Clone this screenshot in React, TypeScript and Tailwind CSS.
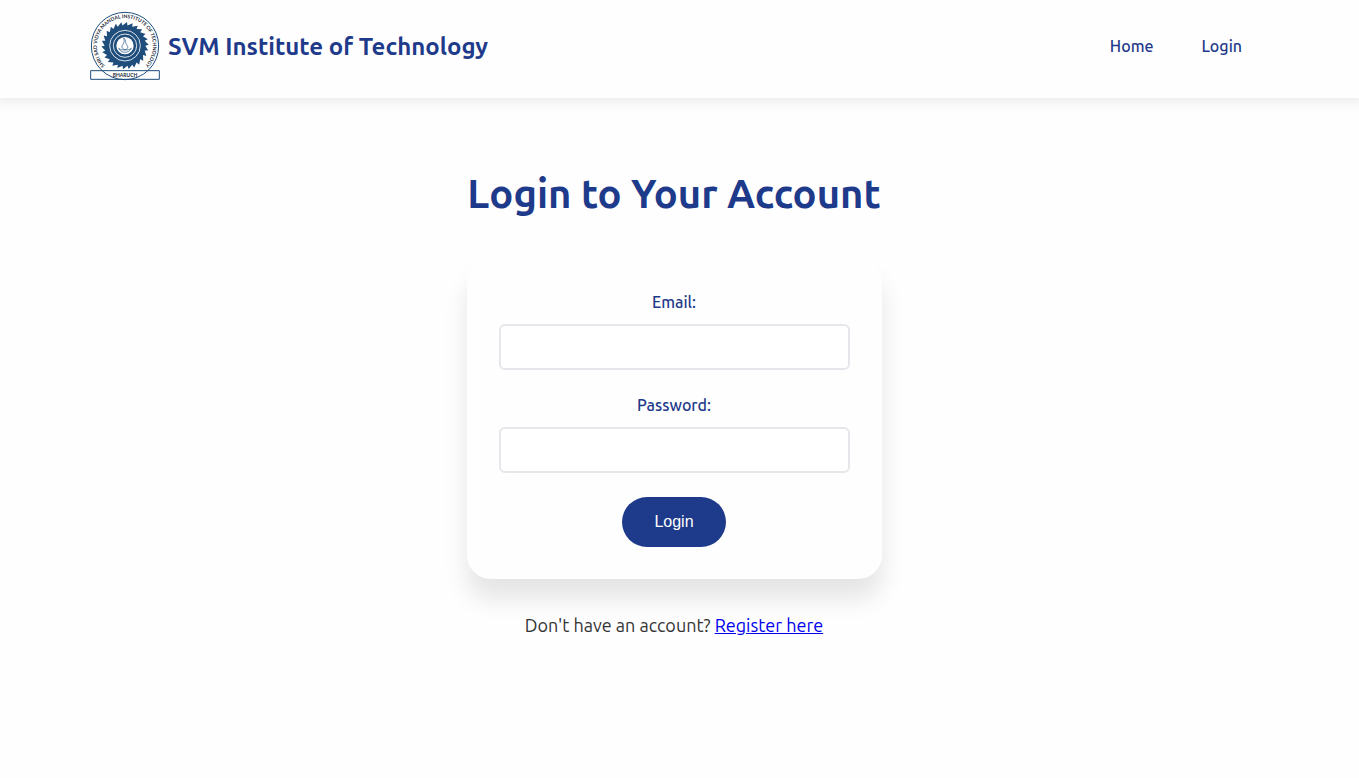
import { useId } from "react";

const TEETH = 26;

function gearPath(cx: number, cy: number, inner: number, outer: number) {
  const points: string[] = [];
  for (let i = 0; i < TEETH; i++) {
    const start = (i / TEETH) * Math.PI * 2;
    const end = ((i + 0.85) / TEETH) * Math.PI * 2;
    points.push(`${(cx + Math.cos(start) * inner).toFixed(1)} ${(cy + Math.sin(start) * inner).toFixed(1)}`);
    points.push(`${(cx + Math.cos(end) * outer).toFixed(1)} ${(cy + Math.sin(end) * outer).toFixed(1)}`);
  }
  return `M${points.join("L")}Z`;
}

function Logo() {
  const arc = useId();
  return (
    <svg viewBox="0 0 210 210" className="size-[70px] shrink-0" role="img" aria-label="SVM Institute of Technology logo">
      <circle cx="105" cy="105" r="101" fill="#fff" stroke="#1f4e7c" strokeWidth="3" />
      <path d={gearPath(105, 104, 61, 71)} fill="#1f4e7c" />
      <circle cx="105" cy="104" r="46" fill="none" stroke="#fff" strokeWidth="2.5" />
      <circle cx="105" cy="104" r="35" fill="none" stroke="#fff" strokeWidth="2.5" />
      <circle cx="105" cy="104" r="26" fill="#fff" />
      <path
        d="M101 81c9 8 4 14 9 20 7 8 2 14-5 15-9-2-12-9-6-16 4-6 5-12 2-19ZM86 112c8 5 11 5 19 5s13-1 19-5c-6 15-31 17-38 0Z"
        fill="none"
        stroke="#1f4e7c"
        strokeWidth="2"
      />
      <path id={arc} d="M45 164A84 84 0 1 1 165 164" fill="none" />
      <text fill="#1c2b3a" className="font-['Lato',sans-serif] text-[15px] font-bold">
        <textPath href={`#${arc}`} startOffset="50%" textAnchor="middle">
          SHRI SAD VIDYA MANDAL INSTITUTE OF TECHNOLOGY
        </textPath>
      </text>
      <path d="M2 179H208V205H2Z" fill="none" stroke="#1f4e7c" strokeWidth="3" />
      <text x="105" y="198" textAnchor="middle" fill="#1c2b3a" className="font-['Lato',sans-serif] text-[15px] font-bold">
        BHARUCH
      </text>
    </svg>
  );
}

function Field({ id, label, type }: { id: string; label: string; type: string }) {
  return (
    <div className="mb-6 flex flex-col items-center">
      <label htmlFor={id} className="mb-[10px] text-base leading-[23px] font-medium text-[#1e3a8a]">
        {label}
      </label>
      <input
        id={id}
        type={type}
        className="h-[46px] w-full rounded-md border-2 border-gray-200 bg-white px-3 font-['Liberation_Sans',sans-serif] text-base outline-none focus:border-[#1e3a8a]"
      />
    </div>
  );
}

export default function App() {
  return (
    <div className="min-h-screen bg-[#fefefe] font-['Ubuntu','Noto_Sans',sans-serif] text-[#333]">
      <header className="bg-[#fefefe] pt-[11px] pr-[11px] pb-[17px] shadow-[0_0_12px_4px_rgba(0,0,0,0.08)]">
        <div className="mx-auto flex max-w-[1168px] items-center justify-between">
          <div className="flex items-center gap-2">
            <Logo />
            <span className="text-2xl leading-[33px] font-semibold text-[#1e3a8a]">SVM Institute of Technology</span>
          </div>
          <nav className="flex gap-4 text-base leading-6 font-medium text-[#1e3a8a]">
            <a href="#home" className="px-4">Home</a>
            <a href="#login" className="px-4">Login</a>
          </nav>
        </div>
      </header>

      <main className="flex flex-col items-center pt-[68px] pr-[11px] text-center">
        <h1 className="mb-[37px] text-[40px] leading-[56px] font-semibold text-[#1e3a8a]">Login to Your Account</h1>
        <form
          onSubmit={(event) => event.preventDefault()}
          className="w-full max-w-[415px] rounded-3xl bg-[#fefefe] p-8 shadow-[0_20px_25px_rgba(0,0,0,0.1)]"
        >
          <Field id="email" label="Email:" type="email" />
          <Field id="password" label="Password:" type="password" />
          <button
            type="submit"
            className="h-[50px] w-[104px] rounded-full bg-[#1e3a8a] font-['Liberation_Sans',sans-serif] text-base text-white"
          >
            Login
          </button>
        </form>
        <p className="mt-8 text-lg leading-7">
          Don't have an account?{" "}
          <a href="#register" className="text-[#0000ee] underline">Register here</a>
        </p>
      </main>
    </div>
  );
}
